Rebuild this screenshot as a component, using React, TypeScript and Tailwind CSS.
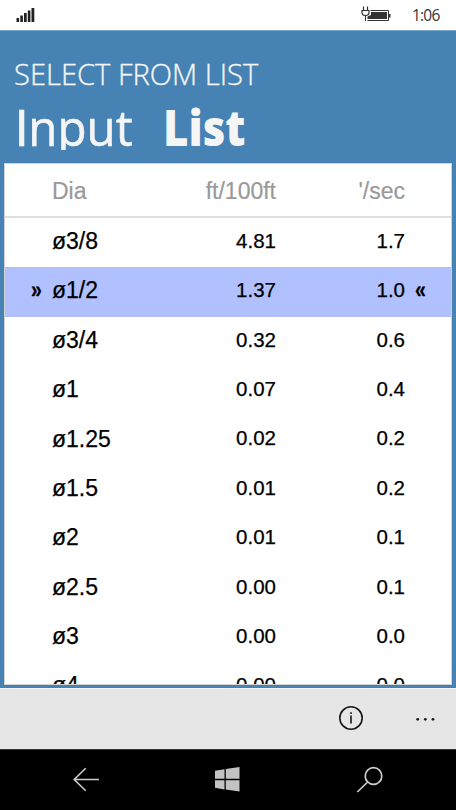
const rows = [
  ["ø3/8", "4.81", "1.7"],
  ["ø1/2", "1.37", "1.0"],
  ["ø3/4", "0.32", "0.6"],
  ["ø1", "0.07", "0.4"],
  ["ø1.25", "0.02", "0.2"],
  ["ø1.5", "0.01", "0.2"],
  ["ø2", "0.01", "0.1"],
  ["ø2.5", "0.00", "0.1"],
  ["ø3", "0.00", "0.0"],
  ["ø4", "0.00", "0.0"],
];

function SignalIcon() {
  return (
    <svg className="ml-4 h-[16px] w-[20px]" viewBox="0 0 20 16" fill="#222">
      <path d="M0.5 11h2.6v4H.5zM4.3 8.5h2.6V15H4.3zM8 6h2.7v9H8zM11.8 3.5h2.6V15h-2.6zM15.5 1h2.8v14h-2.8z" />
    </svg>
  );
}

function BatteryIcon() {
  return (
    <svg className="h-[18px] w-[30px]" viewBox="0 0 30 18" fill="none" stroke="#333">
      <path d="M2.500 0.500V4M6.500 0.500V4" strokeWidth="1.2" />
      <path d="M1 4.500h7v2c0 1.800-1.400 3-3.500 3S1 8.300 1 6.500z" strokeWidth="1.2" />
      <path d="M4.500 9.500V15M6.500 14.500h21v-10H9.500" strokeWidth="1" />
      <path d="M10 6H26v7H6.500v-2.500l3.500-1.500zM28 8h1.500v3.500H28z" fill="#333" stroke="none" />
    </svg>
  );
}

function StatusBar() {
  return (
    <header className="flex h-[30px] shrink-0 items-center bg-white">
      <SignalIcon />
      <div className="ml-auto flex items-center pr-[15px]">
        <BatteryIcon />
        <span className="ml-[21px] w-[29px] whitespace-nowrap font-['Open_Sans',sans-serif] text-[15.5px] leading-[30px] tracking-[-0.8px] text-[#333]">
          1:06
        </span>
      </div>
    </header>
  );
}

function Table() {
  return (
    <section className="mx-[4px] flex h-[522px] w-[448px] flex-col overflow-hidden border border-[#d2d2d2] bg-white font-['Liberation_Sans',sans-serif] text-[23px]">
      <div className="flex h-[54px] shrink-0 items-center border-b-2 border-[#dedede] pt-[2px] text-[#999] [-webkit-text-stroke:0.2px_#999]">
        <span className="ml-[47px] w-[98px]">Dia</span>
        <span className="w-[126px] text-right">ft/100ft</span>
        <span className="w-[129px] text-right">'/sec</span>
      </div>
      {rows.map(([dia, loss, speed], i) => (
        <div
          key={dia}
          className={`flex h-[49.4px] shrink-0 items-center pb-[3px] text-black [-webkit-text-stroke:0.25px_black] ${i === 1 ? "bg-[#b1c0ff]" : "bg-white"}`}
        >
          <span className="w-[37px] origin-right scale-x-[0.85] pb-[1px] text-right text-[23px] font-bold">{i === 1 ? "»" : ""}</span>
          <span className="ml-[10px] w-[98px]">{dia}</span>
          <span className="w-[126px] text-right text-[20.5px]">{loss}</span>
          <span className="w-[129px] text-right text-[20.5px]">{speed}</span>
          <span className="ml-[10px] origin-left scale-x-[0.85] pb-[1px] text-[23px] font-bold">{i === 1 ? "«" : ""}</span>
        </div>
      ))}
    </section>
  );
}

function CommandBar() {
  return (
    <div className="flex h-[61px] shrink-0 items-center justify-end border-t border-[#f4f4f4] bg-[#e6e6e6]">
      <svg className="h-[26px] w-[26px]" viewBox="0 0 26 26" fill="none" stroke="#181818">
        <circle cx="13" cy="12" r="11.2" strokeWidth="1.6" />
        <path d="M13 9.500V17.500M13 6.200v1.800" strokeWidth="1.6" />
      </svg>
      <svg className="mr-[20px] ml-[51px] h-[6px] w-[21px]" viewBox="0 0 21 6" fill="#181818">
        <circle cx="2.700" cy="3.300" r="1.400" />
        <circle cx="10.300" cy="3.300" r="1.400" />
        <circle cx="18" cy="3.300" r="1.400" />
      </svg>
    </div>
  );
}

function NavBar() {
  return (
    <nav className="flex h-[61px] shrink-0 items-center border-t border-[#333] bg-black">
      <svg className="ml-[73px] h-[26px] w-[27px]" viewBox="0 0 27 26" fill="none" stroke="#ccc" strokeWidth="1.6">
        <path d="M26 12.500H1.500M12.700 1.300L1.200 12.500l11.500 11.300" />
      </svg>
      <svg className="ml-[115px] h-[26px] w-[25px]" viewBox="0 0 25 26" fill="#c3c3c3">
        <path d="M0 3.800l9.500-1.600v9.500H0zM10.800 2L24.500 0v11.700H10.800zM0 13.200h9.500v9.300L0 20.800zM10.800 13.200h13.700V24.500l-13.700-2z" />
      </svg>
      <svg className="ml-[116px] h-[28px] w-[28px]" viewBox="0 0 28 28" fill="none" stroke="#ccc" strokeWidth="1.700">
        <circle cx="17.500" cy="10" r="8.300" />
        <path d="M11.700 16L1.300 26" />
      </svg>
    </nav>
  );
}

export default function App() {
  return (
    <div className="flex h-[810px] w-[456px] flex-col overflow-hidden bg-white">
      <StatusBar />
      <main className="flex h-[658px] shrink-0 flex-col border-t border-[#79a8ca] bg-[#4682b4] text-[#f5f5f5]">
        <div className="h-[132px] shrink-0 pt-[23px] font-['Open_Sans',sans-serif]">
          <h1 className="ml-[14px] h-[40px] w-max origin-left scale-x-[0.971] whitespace-nowrap text-[30px] leading-[40px] font-light [-webkit-text-stroke:0.35px_#f5f5f5]">
            SELECT FROM LIST
          </h1>
          <div className="flex h-[66px] text-[50px] leading-[66px]">
            <span className="ml-[15px] h-[56px] w-[148px] origin-left scale-x-[0.95] overflow-hidden [-webkit-text-stroke:0.6px_#f5f5f5]">
              <span className="font-['Lato',sans-serif]">I</span>nput
            </span>
            <span className="w-max origin-left scale-x-[0.875] font-extrabold">List</span>
          </div>
        </div>
        <Table />
      </main>
      <CommandBar />
      <NavBar />
    </div>
  );
}
